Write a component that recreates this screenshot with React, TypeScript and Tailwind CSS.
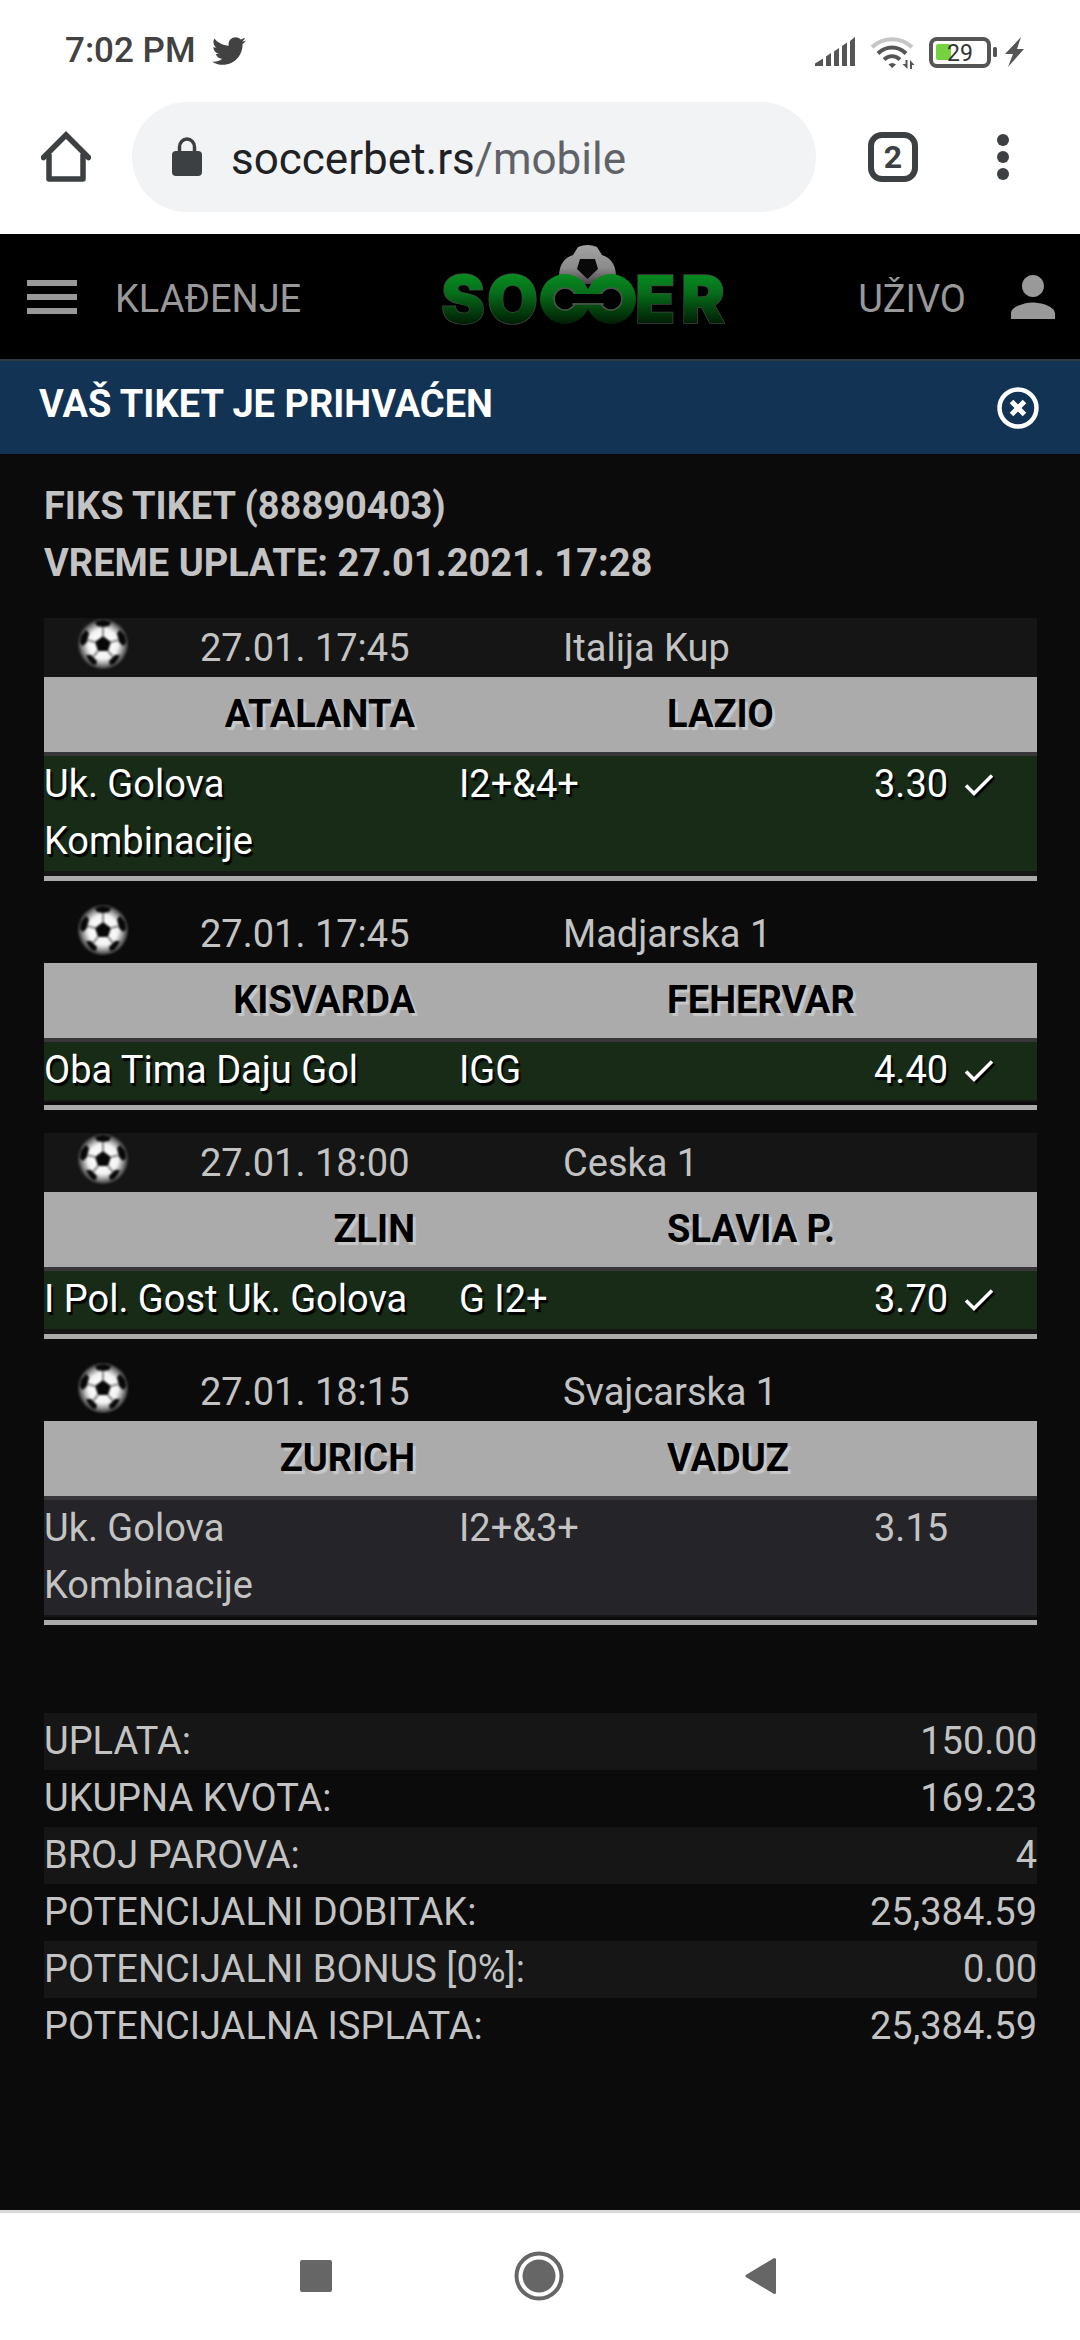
import { FaTwitter } from 'react-icons/fa'
import { MdPerson } from 'react-icons/md'

type Match = {
  time: string
  league: string
  home: string
  away: string
  game: string
  pick: string
  odd: string
  won: boolean
}

const matches: Match[] = [
  { time: '27.01. 17:45', league: 'Italija Kup', home: 'ATALANTA', away: 'LAZIO', game: 'Uk. Golova Kombinacije', pick: 'I2+&4+', odd: '3.30', won: true },
  { time: '27.01. 17:45', league: 'Madjarska 1', home: 'KISVARDA', away: 'FEHERVAR', game: 'Oba Tima Daju Gol', pick: 'IGG', odd: '4.40', won: true },
  { time: '27.01. 18:00', league: 'Ceska 1', home: 'ZLIN', away: 'SLAVIA P.', game: 'I Pol. Gost Uk. Golova', pick: 'G I2+', odd: '3.70', won: true },
  { time: '27.01. 18:15', league: 'Svajcarska 1', home: 'ZURICH', away: 'VADUZ', game: 'Uk. Golova Kombinacije', pick: 'I2+&3+', odd: '3.15', won: false },
]

const summary = [
  ['UPLATA:', '150.00'],
  ['UKUPNA KVOTA:', '169.23'],
  ['BROJ PAROVA:', '4'],
  ['POTENCIJALNI DOBITAK:', '25,384.59'],
  ['POTENCIJALNI BONUS [0%]:', '0.00'],
  ['POTENCIJALNA ISPLATA:', '25,384.59'],
]

const StatusIcons = () => (
  <svg width="212" height="36" viewBox="0 0 212 36" fill="none">
    {/* signal */}
    <g fill="#555">
      <path d="M0 33v-2.500l8-5V33z" />
      <path d="M11 33V23.500l5-3.500v13z" />
      <path d="M19 33V18.500l5-3.500v18z" />
      <path d="M27 33V13l5-3.500V33z" />
      <path d="M35 33V8l5-4v29z" />
    </g>
    {/* wifi */}
    <path d="M57 14c12-10.500 28-10.500 40 0" stroke="#c6c6c6" strokeWidth="4" />
    <path d="M63 20.500c8-8 20-8 28 0M69 26.500c5-4.500 11-4.500 16 0" stroke="#555" strokeWidth="4" />
    <path d="M73.500 31.500c2.500-2 5-2 7.500 0L77.200 35z" fill="#555" />
    <path d="M90.500 27h2v9l-5-5h3zM95 36h2v-4h2.500L95 27z" fill="#555" />
    {/* battery */}
    <rect x="116" y="6" width="58" height="27" rx="6" stroke="#555" strokeWidth="4" />
    <rect x="121" y="11" width="15" height="16" rx="2" fill="#76d13e" />
    <rect x="178" y="14" width="4" height="10" rx="1.500" fill="#555" />
    <text x="132" y="28" fontFamily="Roboto, sans-serif" fontSize="23" fill="#333">29</text>
    <path d="M206 4l-16 17h8l-5 13 16-18h-7z" fill="#555" />
  </svg>
)

const HomeIcon = () => (
  <svg width="50" height="52" viewBox="0 0 50 52" fill="none" stroke="#3c4043" strokeWidth="5.500">
    <path d="M2.500 26.500L25 4l22.500 22.500" strokeLinecap="round" />
    <path d="M8 23v25h34V23" strokeLinejoin="round" />
  </svg>
)

const LockIcon = () => (
  <svg width="30" height="40" viewBox="0 0 30 40" fill="none">
    <rect y="14" width="30" height="25" rx="4" fill="#3c4043" />
    <path d="M7.500 16V10a7.500 8 0 0 1 15 0v6" stroke="#3c4043" strokeWidth="3.500" />
  </svg>
)

const Logo = () => (
  <svg width="290" height="100" viewBox="0 0 290 100" role="img" aria-label="Soccer">
    <defs>
      <linearGradient id="green" gradientUnits="userSpaceOnUse" x1="0" y1="34" x2="0" y2="83">
        <stop offset="0" stopColor="#088a20" />
        <stop offset="0.350" stopColor="#06701a" />
        <stop offset="1" stopColor="#011c04" />
      </linearGradient>
      <linearGradient id="silver" x1="0" y1="0" x2="0" y2="1">
        <stop offset="0" stopColor="#a3a3a3" />
        <stop offset="0.600" stopColor="#8a8a8a" />
        <stop offset="1" stopColor="#4a4248" />
      </linearGradient>
    </defs>
    {/* ball */}
    <path d="M137 6q9.500-4 19 0l5 8q13 4 14 20l-9 9h-39l-9-9q1-16 14-20z" fill="url(#silver)" />
    <path d="M139 18h15l3 10-10.500 10L136 28z" fill="#080808" />
    {/* letters */}
    <g
      fontFamily="Inter, sans-serif"
      fontWeight="900"
      fontSize="66"
      fill="url(#green)"
      stroke="#3f453f"
      strokeWidth="1.500"
      paintOrder="stroke"
    >
      <text x="0" y="82">S</text>
      <text x="46" y="82">O</text>
      <text x="194" y="82">E</text>
      <text x="240" y="82">R</text>
    </g>
    {/* joined rings */}
    <circle cx="124" cy="58" r="25" fill="url(#green)" />
    <circle cx="170" cy="58" r="25" fill="url(#green)" />
    <g fill="#000" stroke="#4e554e" strokeWidth="1.500">
      <circle cx="124" cy="58" r="11" />
      <circle cx="170" cy="58" r="11" />
      <path d="M131 63h32" />
    </g>
    <rect x="127" y="53" width="40" height="9" fill="#000" />
  </svg>
)

const Ball = () => (
  <svg width="52" height="52" viewBox="0 0 52 52">
    <defs>
      <radialGradient id="ball" cx="0.500" cy="0.500" r="0.500">
        <stop offset="0" stopColor="#fff" />
        <stop offset="0.600" stopColor="#f4f4f4" />
        <stop offset="0.800" stopColor="#9a9a9a" />
        <stop offset="1" stopColor="#333" />
      </radialGradient>
    </defs>
    <g className="blur-[1px]">
      <circle cx="26" cy="26" r="25" fill="url(#ball)" />
      <g fill="#080808">
        <path d="M26 18l8 6-3 9H21l-3-9z" />
        <path d="M18 4l8-2 8 2-2 4-6 1-6-1z" />
        <path d="M4 18l5-6 3 3-2 9-4 4-3-3z" />
        <path d="M48 18l-5-6-3 3 2 9 4 4 3-3z" />
        <path d="M9 37l5 0 6 6-1 4-4-1q-4-4-6-9z" />
        <path d="M43 37l-5 0-6 6 1 4 4-1q4-4 6-9z" />
      </g>
      <path d="M26 9v9M34 24l8-2M31 33l5 6M21 33l-5 6M18 24l-8-2" stroke="#888" strokeWidth="2" />
    </g>
  </svg>
)

const Check = () => (
  <svg className="drop-shadow-[2px_2px_0_#000]" width="30" height="24" viewBox="0 0 30 24" fill="none" stroke="#fff" strokeWidth="3.500">
    <path d="M2 12.500l8 8L28 2.500" />
  </svg>
)

const MatchCard = ({ match }: { match: Match }) => (
  <article className="border-b-[5px] border-[#ababab] pb-[3px] odd:bg-[#151515]">
    <div className="grid h-[59px] grid-cols-[156px_363px_1fr] items-center pt-0.5">
      <span className="-mt-2.5 pl-[33px]"><Ball /></span>
      <span>{match.time}</span>
      <span>{match.league}</span>
    </div>
    <div className="grid h-[75px] grid-cols-[371fr_252fr_370fr] items-center bg-[#ababab] font-bold text-black [text-shadow:3px_3px_1px_#c8c8c8]">
      <span className="text-right">{match.home}</span>
      <span />
      <span>{match.away}</span>
    </div>
    <div
      className={`grid grid-cols-[415fr_415fr_163fr] border-t-4 border-b-2 border-t-[#383638] border-b-[#161616] pb-px ${
        match.won ? 'bg-[#172b16] text-white [text-shadow:2px_3px_1px_#000]' : 'bg-[#252429]'
      }`}
    >
      <span className="pr-8">{match.game}</span>
      <span>{match.pick}</span>
      <span className="flex h-[57px] items-center gap-4">
        {match.odd}
        {match.won && <Check />}
      </span>
    </div>
  </article>
)

const App = () => {
  return (
    <div className="flex min-h-screen flex-col bg-[#0b0b0b] font-[Roboto,sans-serif] text-[38px] leading-[57px] text-[#c3c3c3]">
      {/* status bar */}
      <div className="flex h-[102px] items-center justify-between bg-white pr-[53px] pl-[65px]">
        <div className="flex items-center gap-4 text-[35px] leading-[48px] font-medium text-[#424242]">
          7:02 PM
          <FaTwitter size={34} />
        </div>
        <StatusIcons />
      </div>

      {/* address bar */}
      <div className="flex h-[132px] items-start bg-white pr-[71px] pl-[41px]">
        <button className="flex h-[110px] items-center" aria-label="Home">
          <HomeIcon />
        </button>
        <button className="mr-[52px] ml-[41px] flex h-[110px] flex-1 items-center gap-[29px] rounded-full bg-[#f1f3f5] pl-10 text-[44px] text-[#202124]">
          <LockIcon />
          <span className="pt-1">
            soccerbet.rs<span className="text-[#5f6368]">/mobile</span>
          </span>
        </button>
        <button className="mt-[30px] flex size-[50px] items-center justify-center rounded-[14px] border-[6px] border-[#3c4043] text-[32px] leading-[38px] font-bold text-[#3c4043]">
          2
        </button>
        <button className="ml-[79px] flex h-[110px] flex-col items-center justify-center gap-[5px]" aria-label="Menu">
          <i className="size-3 rounded-full bg-[#3c4043]" />
          <i className="size-3 rounded-full bg-[#3c4043]" />
          <i className="size-3 rounded-full bg-[#3c4043]" />
        </button>
      </div>

      {/* site header */}
      <header className="flex h-[127px] items-center border-b-2 border-[#2c3a44] bg-black pr-[14px] pl-[27px] text-[#999]">
        <button className="flex w-[50px] flex-col gap-2" aria-label="Meni">
          <i className="h-1.5 bg-[#999]" />
          <i className="h-1.5 bg-[#999]" />
          <i className="h-1.5 bg-[#999]" />
        </button>
        <a href="#kladjenje" className="pt-1.5 pl-[38px]">KLAĐENJE</a>
        <div className="flex flex-1 justify-center pb-3 pl-3">
          <Logo />
        </div>
        <a href="#uzivo" className="pt-1.5 pr-[34px]">UŽIVO</a>
        <a href="#profil" aria-label="Profil">
          <MdPerson size={66} />
        </a>
      </header>

      {/* accepted message */}
      <div className="flex h-[93px] items-center justify-between bg-[#133354] pr-[41px] pl-[39px] font-bold text-white">
        <span className="pb-1.5">VAŠ TIKET JE PRIHVAĆEN</span>
        <button aria-label="Zatvori">
          <svg width="42" height="42" viewBox="0 0 42 42" fill="none" stroke="#fff">
            <circle cx="21" cy="21" r="18.500" strokeWidth="4.500" />
            <path d="M14.500 14.500l13 13M27.500 14.500l-13 13" strokeWidth="5" />
          </svg>
        </button>
      </div>

      <main className="flex-1 pt-6 pr-[43px] pl-11">
        <div className="font-bold">
          <p>FIKS TIKET (88890403)</p>
          <p>VREME UPLATE: 27.01.2021. 17:28</p>
        </div>

        <section className="mt-[26px] flex flex-col gap-[23px]">
          {matches.map((match) => (
            <MatchCard key={match.home} match={match} />
          ))}
        </section>

        <table className="mt-[88px] w-full">
          <tbody>
            {summary.map(([label, value]) => (
              <tr key={label} className="odd:bg-[#161616]">
                <th scope="row" className="text-left font-normal">{label}</th>
                <td className="text-right">{value}</td>
              </tr>
            ))}
          </tbody>
        </table>
      </main>

      {/* system navigation */}
      <nav className="grid h-[130px] grid-cols-[300px_32px_1fr_50px_1fr_32px_303px] items-center border-t-[3px] border-[#d8d8d8] bg-white pb-0.5">
        <span />
        <button className="size-8 rounded-xs bg-[#666]" aria-label="Recent" />
        <span />
        <button aria-label="Home screen">
          <svg width="50" height="50" viewBox="0 0 50 50">
            <circle cx="25" cy="25" r="22.500" fill="none" stroke="#666" strokeWidth="4" />
            <circle cx="25" cy="25" r="16.500" fill="#666" />
          </svg>
        </button>
        <span />
        <button aria-label="Back">
          <svg width="32" height="38" viewBox="0 0 32 38" fill="#666" stroke="#666" strokeWidth="3" strokeLinejoin="round">
            <path d="M29.500 2.500v33L2 19z" />
          </svg>
        </button>
        <span />
      </nav>
    </div>
  )
}

export default App
